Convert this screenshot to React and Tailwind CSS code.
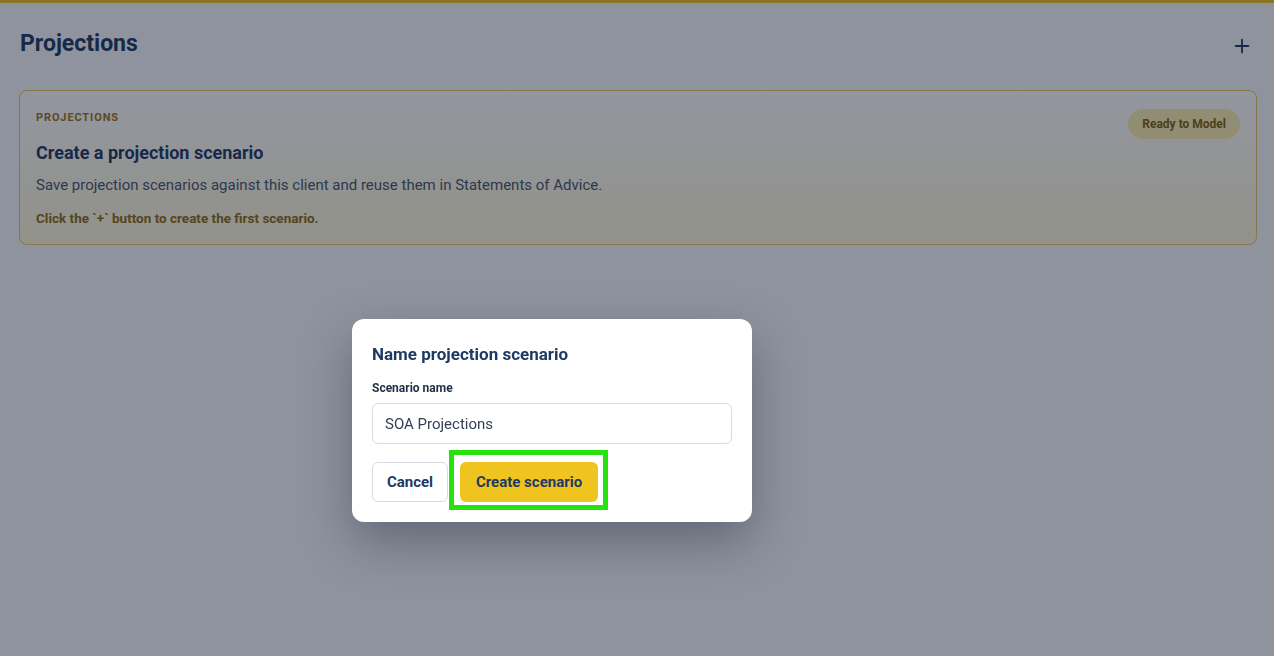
import { useState } from "react";
import { Plus } from "lucide-react";

const font = { fontFamily: "Roboto, 'Noto Sans', sans-serif" };

const ScenarioDialog = ({ onClose }) => {
  const [name, setName] = useState("SOA Projections");

  return (
    <div className="fixed inset-0 bg-[#0f172a]/45 pl-[352px] pt-[319px]">
      <div className="w-[400px] rounded-xl bg-white p-5 shadow-[0_20px_50px_rgba(15,23,42,0.35)]">
        <h2 className="text-[17px] font-bold text-[#1e3a63] leading-6 mt-[3px]">
          Name projection scenario
        </h2>
        <label className="block mt-[14px] text-[12px] font-bold text-[#1f2d45] leading-4">
          Scenario name
        </label>
        <input
          value={name}
          onChange={(e) => setName(e.target.value)}
          className="mt-[7px] block h-[41px] w-full rounded-md border border-[#d5dbe5] px-3 text-[15px] text-[#334155] outline-none"
        />
        <div className="mt-[18px] flex gap-3">
          <button
            onClick={onClose}
            className="h-10 w-[76px] rounded-md border border-[#d5dbe5] bg-white text-[15px] font-bold text-[#1e3a63]"
          >
            Cancel
          </button>
          {/* primary action, with the green focus frame drawn around it */}
          <span className="relative inline-block">
            <button className="h-10 w-[138px] rounded-md bg-[#f0c41f] text-[15px] font-bold text-[#1e3a63]">
              Create scenario
            </button>
            <span className="pointer-events-none absolute -left-[11px] -right-[10px] -top-[12px] -bottom-[8px] border-[5px] border-[#27e30c]" />
          </span>
        </div>
      </div>
    </div>
  );
};

const App = () => {
  const [open, setOpen] = useState(true);

  return (
    <div style={font} className="min-h-screen bg-[#f8fafc] border-t-[3px] border-[#f0c41f]">
      <div className="px-5 pt-[25px]">
        <div className="flex items-center justify-between">
          <h1 className="text-[23px] font-bold text-[#1e3a63] leading-8">
            Projections
          </h1>
          <button onClick={() => setOpen(true)} className="mr-[1px] mt-[4px] text-[#1e3a63]">
            <Plus size={22} strokeWidth={2} />
          </button>
        </div>

        <div className="mt-[30px] ml-[-1px] mr-[-3px] rounded-lg border border-[#e8c861] bg-gradient-to-b from-white to-[#fdf8d8] px-4 pt-[18px] pb-[16px]">
          <div className="flex items-start justify-between">
            <div>
              <p className="text-[11px] font-bold uppercase tracking-[0.08em] text-[#9a7412] leading-4 mt-[1px]">
                Projections
              </p>
              <h2 className="mt-[15px] text-[18px] font-bold text-[#1e3a63] leading-6">
                Create a projection scenario
              </h2>
              <p className="mt-[8px] text-[15px] text-[#475569] leading-6">
                Save projection scenarios against this client and reuse them in Statements of Advice.
              </p>
              <p className="mt-[11px] text-[13.5px] font-bold text-[#8f6c10] leading-5">
                Click the `+` button to create the first scenario.
              </p>
            </div>
            <span className="rounded-full bg-[#fcefaf] px-[14px] py-[7px] text-[12px] font-bold text-[#7f6210] leading-4">
              Ready to Model
            </span>
          </div>
        </div>
      </div>

      {open && <ScenarioDialog onClose={() => setOpen(false)} />}
    </div>
  );
};

export default App;
